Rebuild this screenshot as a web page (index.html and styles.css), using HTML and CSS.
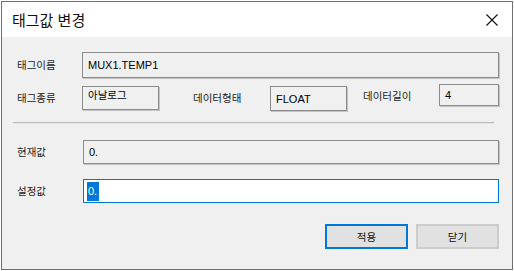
FILE: index.html
```html
<!DOCTYPE html>
<html lang="ko">
<head>
  <meta charset="UTF-8" />
  <meta name="viewport" content="width=device-width, initial-scale=1.0"/>
  <title>태그값 변경</title>
  <link rel="stylesheet" href="styles.css">
</head>
<body>
  <div class="window">
    <div class="titlebar">
      <span class="title">태그값 변경</span>
      <svg class="close" width="12" height="12" viewBox="0 0 12 12">
        <path d="M0.5 0.5 L11.5 11.5 M11.5 0.5 L0.5 11.5" stroke="#111" stroke-width="1.1" fill="none"/>
      </svg>
    </div>

    <div class="content">
      <div class="row row-name">
        <span class="lbl">태그이름</span>
        <div class="field field-name">MUX1.TEMP1</div>
      </div>

      <div class="row row-info">
        <span class="lbl lbl-kind">태그종류</span>
        <div class="field field-kind">아날로그</div>
        <span class="lbl lbl-type">데이터형태</span>
        <div class="field field-type">FLOAT</div>
        <span class="lbl lbl-len">데이터길이</span>
        <div class="field field-len">4</div>
      </div>

      <div class="sep"></div>

      <div class="row row-cur">
        <span class="lbl lbl-wide">현재값</span>
        <div class="field field-value">0.</div>
      </div>

      <div class="row row-set">
        <span class="lbl lbl-wide">설정값</span>
        <div class="field field-input"><span class="sel">0.</span></div>
      </div>

      <div class="button-group">
        <button class="btn btn-default">적용</button>
        <button class="btn">닫기</button>
      </div>
    </div>
  </div>
</body>
</html>
```

FILE: styles.css
```css
body {
  margin: 0;
  background-color: #ffffff;
  font-family: "Liberation Sans", "Noto Sans CJK KR", sans-serif;
  color: #000;
}

.window {
  margin: 1px 0 0 1px;
  width: 512px;
  height: 269px;
  box-sizing: border-box;
  border: 1px solid #707070;
  background-color: #f0f0f0;
  display: flex;
  flex-direction: column;
}

.titlebar {
  height: 35px;
  flex: none;
  background-color: #ffffff;
  display: flex;
  align-items: center;
  justify-content: space-between;
  padding: 0 14px 0 10px;
}

.title {
  font-family: "Noto Sans CJK KR", sans-serif;
  font-size: 15px;
  color: #111;
}

.close {
  display: block;
}

.content {
  padding: 15px 13px 0 15px;
}

.row {
  display: flex;
  align-items: center;
}

.lbl {
  flex: none;
  width: 65px;
  font-family: "Noto Sans CJK KR", sans-serif;
  font-size: 10.5px;
  line-height: 14px;
  color: #222;
}

.lbl-wide {
  width: 66px;
}

.field {
  box-sizing: border-box;
  border: 1px solid #8c8c8c;
  box-shadow: 1px 1px 0 #c4c4c4;
  background-color: #f0f0f0;
  padding-left: 5px;
  font-size: 11px;
  line-height: 14px;
  display: flex;
  align-items: center;
}

.field-name {
  flex: 1;
  height: 26px;
}

.row-info {
  margin-top: 6px;
  align-items: flex-start;
}

.lbl-kind {
  margin-top: 7px;
}

.field-kind {
  width: 77px;
  height: 24px;
  margin-top: 2px;
  align-items: flex-start;
  padding-top: 1px;
  font-family: "Noto Sans CJK KR", sans-serif;
  font-size: 10.5px;
}

.lbl-type {
  width: 77px;
  margin-left: 34px;
  margin-top: 7px;
}

.field-type {
  width: 77px;
  height: 25px;
  margin-top: 2px;
}

.lbl-len {
  width: 76px;
  margin-left: 16px;
  margin-top: 5px;
}

.field-len {
  width: 60px;
  height: 22px;
}

.sep {
  margin: 11px 5px 0 -4px;
  height: 1px;
  background-color: #bdbdbd;
  border-bottom: 1px solid #e4e4e4;
}

.row-cur {
  margin-top: 16px;
}

.field-value {
  flex: 1;
  height: 24px;
}

.row-set {
  margin-top: 15px;
}

.field-input {
  flex: 1;
  height: 24px;
  background-color: #ffffff;
  border: 1px solid #0078d7;
  box-shadow: none;
  padding-left: 3px;
}

.sel {
  background-color: #0078d7;
  color: #ffffff;
  line-height: 19px;
  padding: 0 2px 0 1px;
}

.button-group {
  display: flex;
  justify-content: flex-end;
  gap: 8px;
  margin-top: 21px;
}

.btn {
  width: 83px;
  height: 25px;
  box-sizing: border-box;
  margin: 0;
  padding: 0;
  background-color: #e1e1e1;
  border: 2px solid #cccccc;
  font-family: "Noto Sans CJK KR", sans-serif;
  font-size: 10.5px;
  color: #111;
}

.btn-default {
  border-color: #0078d7;
}
```
